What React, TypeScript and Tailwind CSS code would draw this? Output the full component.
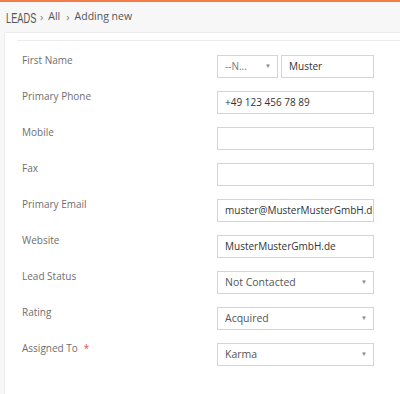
import { ReactNode } from 'react';

const rows: { label: string; required?: boolean; field: ReactNode }[] = [
    { label: 'First Name', field: <NameField /> },
    { label: 'Primary Phone', field: <TextBox value="+49 123 456 78 89" /> },
    { label: 'Mobile', field: <TextBox value="" /> },
    { label: 'Fax', field: <TextBox value="" /> },
    { label: 'Primary Email', field: <TextBox value="muster@MusterMusterGmbH.de" /> },
    { label: 'Website', field: <TextBox value="MusterMusterGmbH.de" /> },
    { label: 'Lead Status', field: <SelectBox value="Not Contacted" /> },
    { label: 'Rating', field: <SelectBox value="Acquired" /> },
    { label: 'Assigned To', required: true, field: <SelectBox value="Karma" /> },
];

function Caret() {
    return <span className="text-[6px] text-[#888]">▼</span>;
}

function TextBox({ value }: { value: string }) {
    return (
        <div className="h-[23px] w-[157px] border border-[#d5d5d5] bg-white pl-[7px] flex items-center overflow-hidden whitespace-nowrap text-[10px] text-[#333]">
            {value}
        </div>
    );
}

function SelectBox({ value }: { value: string }) {
    return (
        <div className="h-[23px] w-[157px] border border-[#d5d5d5] bg-white pl-[7px] pr-[6px] flex items-center justify-between text-[10.5px] text-[#555]">
            <span>{value}</span>
            <Caret />
        </div>
    );
}

function NameField() {
    return (
        <div className="flex gap-[3px]">
            <div className="h-[23px] w-[61px] border border-[#d5d5d5] bg-white pl-[7px] pr-[6px] flex items-center justify-between text-[10px] text-[#777]">
                <span>--N...</span>
                <Caret />
            </div>
            <div className="h-[23px] w-[93px] border border-[#d5d5d5] bg-white pl-[7px] flex items-center text-[10px] text-[#333]">
                Muster
            </div>
        </div>
    );
}

export default function App() {
    return (
        <div className="w-[400px] h-[394px] overflow-hidden bg-[#f7f7f7] border-t-2 border-[#f47c48] font-['Open_Sans',sans-serif]">
            {/* Breadcrumb */}
            <div className="h-[30px] flex items-center pl-[6px] text-[#555]">
                <span className="inline-block w-[28px] overflow-visible">
                    <span className="inline-block origin-left scale-x-[0.66] font-['Liberation_Sans',sans-serif] text-[14px] text-[#555]">LEADS</span>
                </span>
                <span className="ml-[6px] text-[11px] text-[#777]">›</span>
                <span className="ml-[5px] text-[10.5px] text-[#555]">All</span>
                <span className="ml-[6px] text-[11px] text-[#777]">›</span>
                <span className="ml-[5px] text-[10.5px] text-[#555]">Adding new</span>
            </div>

            {/* Form card */}
            <div className="ml-[4px] h-full bg-white border-l border-t border-[#ececec] pt-[7px]">
                <div className="ml-[12px] border-t border-[#ececec]" />
                <div className="pt-[14px]">
                    {rows.map((row, idx) => (
                        <div key={`row-${idx}`} className="flex h-[36px]">
                            <div className="w-[212px] pl-[17px] -mt-[2px] text-[10px] text-[#6e6e6e] leading-[14px]">
                                {row.label}
                                {row.required && <span className="ml-[6px] text-[#e05050]">*</span>}
                            </div>
                            <div>{row.field}</div>
                        </div>
                    ))}
                </div>
            </div>
        </div>
    );
}
